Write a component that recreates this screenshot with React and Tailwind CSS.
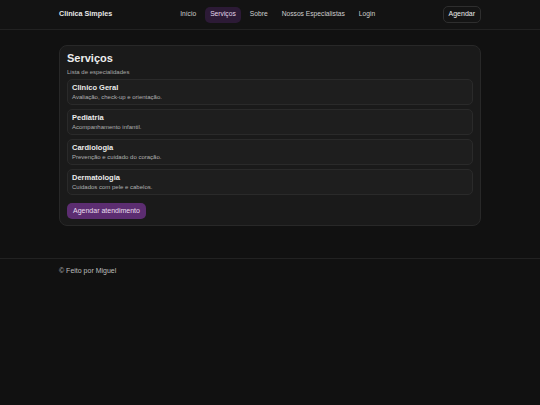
import React from 'react';

const services = [
  { name: 'Clinico Geral', desc: 'Avaliação, check-up e orientação.' },
  { name: 'Pediatria', desc: 'Acompanhamento infantil.' },
  { name: 'Cardiologia', desc: 'Prevenção e cuidado do coração.' },
  { name: 'Dermatologia', desc: 'Cuidados com pele e cabelos.' },
];

const navItems = ['Início', 'Serviços', 'Sobre', 'Nossos Especialistas', 'Login'];

export default function App() {
  return (
    <div className="min-h-[405px] bg-[#111111] text-[#e6e6e6] font-['Liberation_Sans',Arial,sans-serif]">
      {/* Header */}
      <header className="h-[30px] border-b border-[#222222] bg-[#131313]">
        <div className="w-[422px] mx-auto h-full flex items-center">
          <span className="text-[7.2px] font-bold text-[#e8e8e8]">Clinica Simples</span>
          <nav className="flex items-center gap-[4px] ml-[63px]">
            {navItems.map((item) => (
              <span
                key={item}
                className={`px-[5px] h-[16px] flex items-center rounded-[5px] text-[6.7px] ${
                  item === 'Serviços' ? 'bg-[#2c1a36] text-[#e3d6ea]' : 'text-[#cfcfcf]'
                }`}
              >
                {item}
              </span>
            ))}
          </nav>
          <button className="ml-auto h-[17px] px-[5px] rounded-[5px] border border-[#2e2e2e] bg-[#141414] text-[7px] text-[#ececec]">
            Agendar
          </button>
        </div>
      </header>

      {/* Main */}
      <main className="w-[422px] mx-auto pt-[15px]">
        <section className="rounded-[8px] border border-[#282828] bg-[#1a1a1a] px-[7px] pt-[5px] pb-[5px]">
          <h2 className="text-[11px] font-bold text-[#ededed] leading-[14px]">Serviços</h2>
          <p className="text-[6px] text-[#a8a8a8] mt-[3px] leading-[8px]">Lista de especialidades</p>
          <div className="mt-[3px] flex flex-col gap-[4px]">
            {services.map((s) => (
              <div
                key={s.name}
                className="h-[26px] rounded-[5px] border border-[#2a2a2a] bg-[#1e1e1e] px-[4px] flex flex-col justify-center"
              >
                <p className="text-[7.5px] font-bold text-[#ececec] leading-[10px]">{s.name}</p>
                <p className="text-[6px] text-[#b0b0b0] leading-[9px]">{s.desc}</p>
              </div>
            ))}
          </div>
          <button className="mt-[8px] h-[16px] px-[6px] rounded-[5px] bg-[#5c2d71] text-[7px] text-[#eadff0]">
            Agendar atendimento
          </button>
        </section>
      </main>

      {/* Footer */}
      <footer className="mt-[32px] border-t border-[#222222]">
        <div className="w-[422px] mx-auto pt-[7px]">
          <p className="text-[7px] text-[#bdbdbd]">© Feito por Miguel</p>
        </div>
      </footer>
    </div>
  );
}
